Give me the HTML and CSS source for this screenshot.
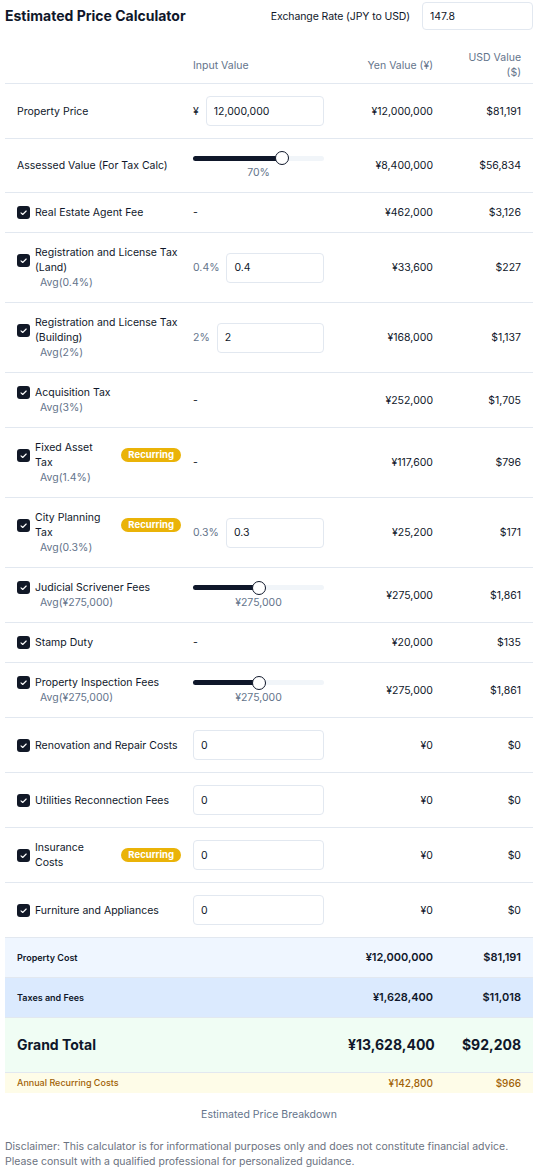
FILE: index.html
```html
<!DOCTYPE html>
<html lang="en">
<head>
<meta charset="utf-8">
<title>Estimated Price Calculator</title>
<link rel="stylesheet" href="styles.css">
</head>
<body>
<div class="page">
  <header class="top">
    <h1 class="title">Estimated Price Calculator</h1>
    <label class="rate">
      <span class="rate-label">Exchange Rate (JPY to USD)</span>
      <input class="rate-input" type="text" value="147.8">
    </label>
  </header>

  <table class="calc">
    <colgroup>
      <col class="c-name"><col class="c-input"><col class="c-yen"><col class="c-usd">
    </colgroup>
    <thead>
      <tr>
        <th></th>
        <th class="left">Input Value</th>
        <th class="right">Yen Value (¥)</th>
        <th class="right">USD Value<br>($)</th>
      </tr>
    </thead>
    <tbody>
      <tr>
        <td><span class="plain-name">Property Price</span></td>
        <td><div class="field"><span class="prefix">¥</span><input class="box" type="text" value="12,000,000"></div></td>
        <td class="num">¥12,000,000</td>
        <td class="num">$81,191</td>
      </tr>
      <tr>
        <td><span class="plain-name">Assessed Value (For Tax Calc)</span></td>
        <td>
          <div class="slider" style="--p:0.7">
            <div class="track"><div class="fill"></div><div class="thumb"></div></div>
            <div class="slider-value">70%</div>
          </div>
        </td>
        <td class="num">¥8,400,000</td>
        <td class="num">$56,834</td>
      </tr>
      <tr>
        <td><div class="item"><span class="check"><svg viewBox="0 0 13 13"><rect width="13" height="13" rx="3"/><path d="M4 6.8l1.7 1.7L9.2 5"/></svg></span><span class="name">Real Estate Agent Fee</span></div></td>
        <td><span class="dash">-</span></td>
        <td class="num">¥462,000</td>
        <td class="num">$3,126</td>
      </tr>
      <tr>
        <td><div class="item"><span class="check"><svg viewBox="0 0 13 13"><rect width="13" height="13" rx="3"/><path d="M4 6.8l1.7 1.7L9.2 5"/></svg></span><span class="name">Registration and License Tax (Land)</span></div><div class="avg">Avg(0.4%)</div></td>
        <td><div class="field"><span class="prefix muted">0.4%</span><input class="box" type="text" value="0.4"></div></td>
        <td class="num">¥33,600</td>
        <td class="num">$227</td>
      </tr>
      <tr>
        <td><div class="item"><span class="check"><svg viewBox="0 0 13 13"><rect width="13" height="13" rx="3"/><path d="M4 6.8l1.7 1.7L9.2 5"/></svg></span><span class="name">Registration and License Tax (Building)</span></div><div class="avg">Avg(2%)</div></td>
        <td><div class="field"><span class="prefix muted">2%</span><input class="box" type="text" value="2"></div></td>
        <td class="num">¥168,000</td>
        <td class="num">$1,137</td>
      </tr>
      <tr>
        <td><div class="item"><span class="check"><svg viewBox="0 0 13 13"><rect width="13" height="13" rx="3"/><path d="M4 6.8l1.7 1.7L9.2 5"/></svg></span><span class="name">Acquisition Tax</span></div><div class="avg">Avg(3%)</div></td>
        <td><span class="dash">-</span></td>
        <td class="num">¥252,000</td>
        <td class="num">$1,705</td>
      </tr>
      <tr>
        <td><div class="item"><span class="check"><svg viewBox="0 0 13 13"><rect width="13" height="13" rx="3"/><path d="M4 6.8l1.7 1.7L9.2 5"/></svg></span><span class="name narrow">Fixed Asset Tax</span><span class="badge">Recurring</span></div><div class="avg">Avg(1.4%)</div></td>
        <td><span class="dash">-</span></td>
        <td class="num">¥117,600</td>
        <td class="num">$796</td>
      </tr>
      <tr>
        <td><div class="item"><span class="check"><svg viewBox="0 0 13 13"><rect width="13" height="13" rx="3"/><path d="M4 6.8l1.7 1.7L9.2 5"/></svg></span><span class="name narrow">City Planning Tax</span><span class="badge">Recurring</span></div><div class="avg">Avg(0.3%)</div></td>
        <td><div class="field"><span class="prefix muted">0.3%</span><input class="box" type="text" value="0.3"></div></td>
        <td class="num">¥25,200</td>
        <td class="num">$171</td>
      </tr>
      <tr>
        <td><div class="item"><span class="check"><svg viewBox="0 0 13 13"><rect width="13" height="13" rx="3"/><path d="M4 6.8l1.7 1.7L9.2 5"/></svg></span><span class="name">Judicial Scrivener Fees</span></div><div class="avg">Avg(¥275,000)</div></td>
        <td>
          <div class="slider" style="--p:0.5">
            <div class="track"><div class="fill"></div><div class="thumb"></div></div>
            <div class="slider-value">¥275,000</div>
          </div>
        </td>
        <td class="num">¥275,000</td>
        <td class="num">$1,861</td>
      </tr>
      <tr>
        <td><div class="item"><span class="check"><svg viewBox="0 0 13 13"><rect width="13" height="13" rx="3"/><path d="M4 6.8l1.7 1.7L9.2 5"/></svg></span><span class="name">Stamp Duty</span></div></td>
        <td><span class="dash">-</span></td>
        <td class="num">¥20,000</td>
        <td class="num">$135</td>
      </tr>
      <tr>
        <td><div class="item"><span class="check"><svg viewBox="0 0 13 13"><rect width="13" height="13" rx="3"/><path d="M4 6.8l1.7 1.7L9.2 5"/></svg></span><span class="name">Property Inspection Fees</span></div><div class="avg">Avg(¥275,000)</div></td>
        <td>
          <div class="slider" style="--p:0.5">
            <div class="track"><div class="fill"></div><div class="thumb"></div></div>
            <div class="slider-value">¥275,000</div>
          </div>
        </td>
        <td class="num">¥275,000</td>
        <td class="num">$1,861</td>
      </tr>
      <tr>
        <td><div class="item"><span class="check"><svg viewBox="0 0 13 13"><rect width="13" height="13" rx="3"/><path d="M4 6.8l1.7 1.7L9.2 5"/></svg></span><span class="name">Renovation and Repair Costs</span></div></td>
        <td><div class="field"><input class="box" type="text" value="0"></div></td>
        <td class="num">¥0</td>
        <td class="num">$0</td>
      </tr>
      <tr>
        <td><div class="item"><span class="check"><svg viewBox="0 0 13 13"><rect width="13" height="13" rx="3"/><path d="M4 6.8l1.7 1.7L9.2 5"/></svg></span><span class="name">Utilities Reconnection Fees</span></div></td>
        <td><div class="field"><input class="box" type="text" value="0"></div></td>
        <td class="num">¥0</td>
        <td class="num">$0</td>
      </tr>
      <tr>
        <td><div class="item"><span class="check"><svg viewBox="0 0 13 13"><rect width="13" height="13" rx="3"/><path d="M4 6.8l1.7 1.7L9.2 5"/></svg></span><span class="name narrow">Insurance Costs</span><span class="badge">Recurring</span></div></td>
        <td><div class="field"><input class="box" type="text" value="0"></div></td>
        <td class="num">¥0</td>
        <td class="num">$0</td>
      </tr>
      <tr>
        <td><div class="item"><span class="check"><svg viewBox="0 0 13 13"><rect width="13" height="13" rx="3"/><path d="M4 6.8l1.7 1.7L9.2 5"/></svg></span><span class="name">Furniture and Appliances</span></div></td>
        <td><div class="field"><input class="box" type="text" value="0"></div></td>
        <td class="num">¥0</td>
        <td class="num">$0</td>
      </tr>
    </tbody>
    <tbody class="summary">
      <tr class="sum-property">
        <td class="sum-label">Property Cost</td>
        <td></td>
        <td class="num">¥12,000,000</td>
        <td class="num">$81,191</td>
      </tr>
      <tr class="sum-taxes">
        <td class="sum-label">Taxes and Fees</td>
        <td></td>
        <td class="num">¥1,628,400</td>
        <td class="num">$11,018</td>
      </tr>
      <tr class="sum-grand">
        <td class="sum-label">Grand Total</td>
        <td></td>
        <td class="num">¥13,628,400</td>
        <td class="num">$92,208</td>
      </tr>
      <tr class="sum-annual">
        <td class="sum-label">Annual Recurring Costs</td>
        <td></td>
        <td class="num">¥142,800</td>
        <td class="num">$966</td>
      </tr>
    </tbody>
  </table>

  <p class="caption">Estimated Price Breakdown</p>
  <p class="disclaimer">Disclaimer: This calculator is for informational purposes only and does not constitute financial advice. Please consult with a qualified professional for personalized guidance.</p>
</div>
</body>
</html>
```

FILE: styles.css
```css
* { box-sizing: border-box; }

html, body {
  margin: 0;
  padding: 0;
  background: #ffffff;
}

body {
  font-family: Inter, "Noto Sans", "Liberation Sans", sans-serif;
  font-size: 10.5px;
  line-height: 15px;
  color: #0f172a;
}

.page {
  width: 533px;
  padding: 2px 0 0 5px;
}

.top {
  display: flex;
  align-items: center;
  justify-content: space-between;
  height: 28px;
}

.title {
  margin: 0;
  font-size: 14px;
  line-height: 20px;
  font-weight: 700;
}

.rate {
  display: flex;
  align-items: center;
  gap: 12px;
}

.rate-label {
  color: #0f172a;
  letter-spacing: -0.1px;
}

.rate-input {
  width: 111px;
  height: 28px;
  border: 1px solid #e2e8f0;
  border-radius: 4px;
  padding: 0 7px;
  font: inherit;
  color: #0f172a;
  outline: none;
}

.calc {
  width: 528px;
  margin-top: 9px;
  border-collapse: collapse;
  table-layout: fixed;
}

.c-name { width: 180px; }
.c-input { width: 151px; }
.c-yen { width: 109px; }
.c-usd { width: 88px; }

.calc th,
.calc td {
  padding: 12px 12px;
  vertical-align: middle;
  border-bottom: 1px solid #e2e8f0;
}

.calc th {
  padding-top: 11px;
  padding-bottom: 3px;
  font-weight: 400;
  color: #64748b;
}

.calc th:first-child,
.calc td:first-child {
  padding-right: 4px;
}

.calc th:nth-child(2),
.calc td:nth-child(2) {
  padding-left: 8px;
}

.left { text-align: left; }
.right { text-align: right; }

.num {
  text-align: right;
  white-space: nowrap;
}

.item {
  display: flex;
  align-items: center;
  gap: 5px;
}

.check {
  flex: none;
  width: 13px;
  height: 13px;
  display: block;
}

.check svg {
  display: block;
  width: 13px;
  height: 13px;
}

.check rect { fill: #111827; }

.check path {
  fill: none;
  stroke: #ffffff;
  stroke-width: 1.1;
  stroke-linecap: round;
  stroke-linejoin: round;
}

.name.narrow {
  max-width: 72px;
}

.badge {
  flex: none;
  margin-left: auto;
  background: #eab308;
  color: #ffffff;
  font-size: 9.5px;
  line-height: 14px;
  font-weight: 700;
  padding: 0 7px;
  border-radius: 8px;
}

.avg {
  margin-left: 23px;
  color: #64748b;
}

.dash { color: #0f172a; }

.field {
  display: flex;
  align-items: center;
  gap: 7px;
}

.prefix {
  flex: none;
}

.muted { color: #64748b; }

.box {
  flex: 1;
  min-width: 0;
  height: 30px;
  border: 1px solid #e2e8f0;
  border-radius: 4px;
  padding: 0 7px;
  font: inherit;
  color: #0f172a;
  background: #ffffff;
  outline: none;
}

.slider {
  width: 100%;
  --thumb: 14px;
}

.track {
  position: relative;
  height: var(--thumb);
}

.track::before {
  content: "";
  position: absolute;
  left: 0;
  right: 0;
  top: 4.5px;
  height: 5px;
  border-radius: 3px;
  background: #f1f5f9;
}

.fill {
  position: absolute;
  left: 0;
  top: 4.5px;
  height: 5px;
  width: calc(var(--thumb) / 2 + (100% - var(--thumb)) * var(--p));
  border-radius: 3px 0 0 3px;
  background: #0f172a;
}

.thumb {
  position: absolute;
  top: 0;
  left: calc((100% - var(--thumb)) * var(--p));
  width: var(--thumb);
  height: var(--thumb);
  border-radius: 50%;
  background: #ffffff;
  border: 1.5px solid #0f172a;
}

.slider-value {
  margin-top: 1px;
  line-height: 14px;
  text-align: center;
  color: #64748b;
}

.summary td {
  border-bottom: 0;
  border-top: 1px solid #e2e8f0;
}

.sum-label { font-weight: 600; }

.sum-property,
.sum-taxes {
  font-size: 11px;
}

.summary .num { font-weight: 600; }

.sum-property { background: #eff6ff; }
.sum-property .sum-label,
.sum-taxes .sum-label { font-size: 9px; }

.sum-taxes { background: #dbeafe; }

.sum-grand { background: #f0fdf4; }
.sum-grand td {
  font-size: 14px;
  line-height: 20px;
  font-weight: 700;
  padding-top: 17px;
  padding-bottom: 17px;
}
.sum-grand .num { font-weight: 700; }

.sum-annual { background: #fefce8; }
.sum-annual td {
  color: #a16207;
  font-size: 9px;
  line-height: 14px;
  padding-top: 3px;
  padding-bottom: 3px;
}
.sum-annual .sum-label { font-weight: 500; }
.sum-annual .num { font-size: 10px; font-weight: 500; }

.caption {
  margin: 15px 0 0;
  text-align: center;
  color: #64748b;
  line-height: 14px;
}

.disclaimer {
  margin: 17px 0 0;
  color: #6b7280;
  line-height: 15px;
}
```
